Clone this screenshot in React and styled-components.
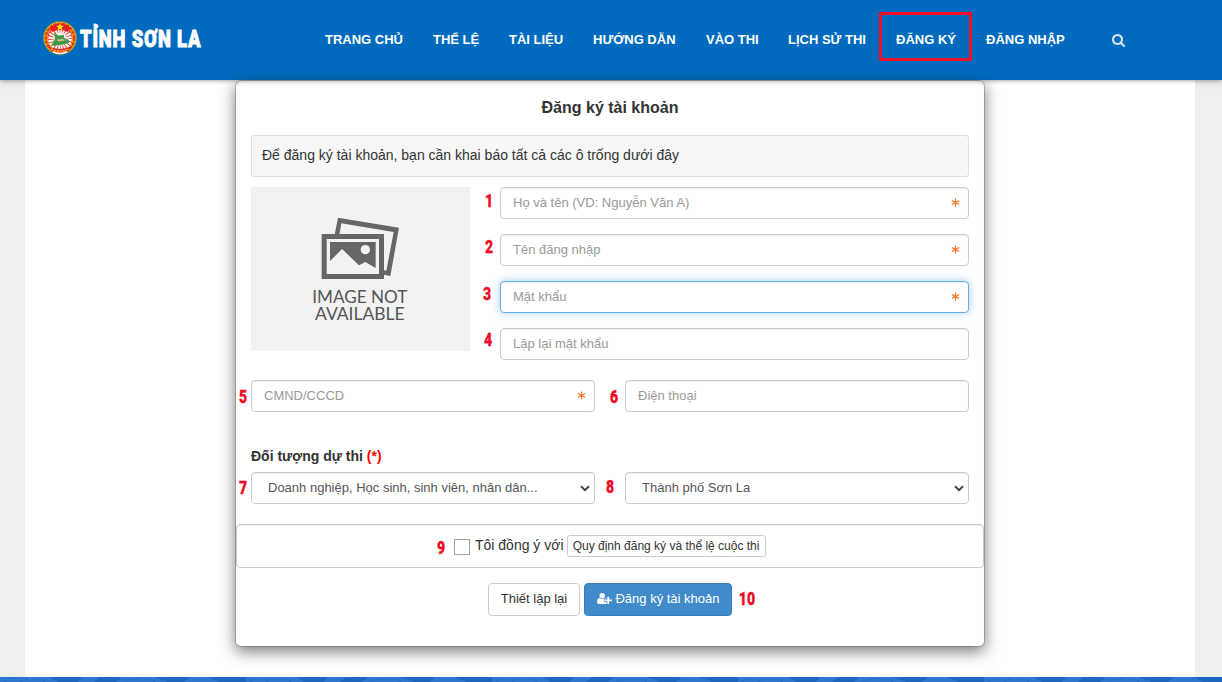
import React from "react";
import styled, { createGlobalStyle, css } from "styled-components";

const GlobalStyle = createGlobalStyle`
  *, *::before, *::after { box-sizing: border-box; }
  body {
    margin: 0;
    height: 682px;
    overflow: hidden;
    background: #efefef;
    color: #333;
    font: 14px/20px "Liberation Sans", Arial, sans-serif;
  }
`;

const Page = styled.div`
  display: flex;
  flex-direction: column;
  height: 682px;
`;

const Header = styled.header`
  display: flex;
  align-items: center;
  height: 80px;
  padding: 0 97px 0 43px;
  background: #006bbe;
  box-shadow: 0 0 6px rgba(0, 0, 0, 0.5);
`;

const Brand = styled.a`
  display: flex;
  align-items: center;
  width: 267px;
  height: 76px;
  margin-bottom: 4px;
`;

const BrandName = styled.span`
  width: 120px;
  margin: 2px 0 0 3px;
  color: #fff;
  font: 900 24px/30px Roboto, sans-serif;
  letter-spacing: 1.1px;
  white-space: nowrap;
  transform: scaleX(0.765);
  transform-origin: left;
  -webkit-text-stroke: 0.9px #fff;
`;

const Nav = styled.nav`
  display: flex;
  align-items: center;
`;

const NavLink = styled.a`
  position: relative;
  width: ${(p) => p.$w}px;
  padding-left: 15px;
  color: #fff;
  font-size: 13px;
  font-weight: bold;
  line-height: 20px;
  white-space: nowrap;
`;

const Highlight = styled.span`
  position: absolute;
  left: -2px;
  top: -18px;
  width: 93px;
  height: 49px;
  border: 3px solid #f0102a;
`;

const SearchButton = styled.a`
  display: flex;
  margin: 0 0 1px 31px;
  color: #dbe5f0;
`;

const Main = styled.main`
  display: flex;
  justify-content: center;
  flex: 1;
  width: 1170px;
  margin: 0 27px 0 25px;
  background: #fff;
  box-shadow: inset 0 5px 5px -5px rgba(0, 0, 0, 0.5);
`;

const Panel = styled.form`
  position: relative;
  width: 750px;
  height: 567px;
  border: 1px solid rgba(0, 0, 0, 0.2);
  border-radius: 6px;
  background: #fff;
  background-clip: padding-box;
  box-shadow: 0 5px 15px rgba(0, 0, 0, 0.5), inset 0 5px 5px -5px rgba(0, 0, 0, 0.4);
`;

const PanelBody = styled.div`
  padding: 16px 15px 0;
`;

const Title = styled.h2`
  margin: 0 0 16px;
  font-size: 16px;
  line-height: 22px;
  text-align: center;
`;

const Notice = styled.p`
  height: 42px;
  margin: 0 0 10px;
  padding: 9px 10px;
  border: 1px solid #ddd;
  border-radius: 3px;
  background: #f7f7f7;
`;

const TopSection = styled.div`
  display: flex;
  gap: 30px;
`;

const Picture = styled.div`
  width: 219px;
  height: 164px;
  padding: 13px 0 0 39px;
  background: #f2f2f2;
`;

const FieldStack = styled.div`
  display: grid;
  flex: 1;
  gap: 15px;
`;

const FieldRow = styled.div`
  display: grid;
  grid-template-columns: 1fr 1fr;
  gap: 30px;
  margin-top: ${(p) => p.$top}px;
`;

const Field = styled.div`
  position: relative;
  display: flex;
  height: 32px;
`;

const control = css`
  width: 100%;
  height: 32px;
  margin: 0;
  padding: 5px 12px 7px;
  border: 1px solid #ccc;
  border-radius: 4px;
  background-color: #fff;
  box-shadow: inset 0 1px 1px rgba(0, 0, 0, 0.075);
  color: #555;
  font: 13px/18px "Liberation Sans", Arial, sans-serif;
  outline: 0;
`;

const Input = styled.input`
  ${control}
  &::placeholder { color: #999; opacity: 1; }
  ${(p) => p.$active && css`
    border-color: #66afe9;
    box-shadow: inset 0 1px 1px rgba(0, 0, 0, 0.075), 0 0 8px rgba(102, 175, 233, 0.6);
  `}
`;

const Select = styled.select`
  ${control}
  appearance: none;
  padding: 6px 16px;
`;

const Chevron = styled.svg`
  position: absolute;
  right: 5px;
  top: 13px;
  fill: none;
  stroke: #444;
  stroke-width: 2;
  pointer-events: none;
`;

const RequiredMark = styled.svg`
  position: absolute;
  right: 9px;
  top: 11px;
  stroke: #f6711a;
`;

const Step = styled.b`
  position: absolute;
  left: ${(p) => p.$x}px;
  top: ${(p) => p.$y}px;
  width: 30px;
  color: #f00a24;
  font: 900 18px/20px Roboto, sans-serif;
  text-align: center;
  transform: scaleX(0.78);
  -webkit-text-stroke: 0.3px #f00a24;
`;

const Label = styled.div`
  height: 20px;
  margin: 34px 0 6px;
  font-weight: bold;
  em { color: #f00; font-style: normal; }
`;

const Agreement = styled.div`
  position: relative;
  display: flex;
  align-items: flex-start;
  height: 44px;
  margin-top: 20px;
  padding: 10px 0 0 217px;
  border: 1px solid #ccc;
  border-radius: 4px;
  box-shadow: inset 0 1px 1px rgba(0, 0, 0, 0.075);
`;

const Checkbox = styled.input`
  appearance: none;
  width: 16px;
  height: 16px;
  margin: 4px 5px 0 0;
  border: 1px solid #a2a2a2;
  background: #fff;
`;

const Button = styled.button`
  display: flex;
  align-items: center;
  justify-content: center;
  width: ${(p) => p.$w}px;
  height: 33px;
  padding: 0 0 2px;
  border: 1px solid #ccc;
  border-radius: 4px;
  background: #fff;
  color: #333;
  font: 13px/18px "Liberation Sans", Arial, sans-serif;
  white-space: nowrap;
  ${(p) => p.$primary && css`
    border-color: #357ebd;
    background: #428bca;
    color: #fff;
  `}
  ${(p) => p.$small && css`
    height: 22px;
    margin-left: 3px;
    padding: 0;
    border-radius: 3px;
    font-size: 12px;
  `}
  svg { margin: 0 3px 0 1px; }
`;

const Actions = styled.div`
  position: relative;
  display: flex;
  gap: 4px;
  padding: 15px 0 0 252px;
`;

const FooterStrip = styled.footer`
  height: 5px;
  background: #1d65c0;
  overflow: hidden;
  svg { display: block; }
`;

const Emblem = () => (
  <svg width="34" height="34" viewBox="-17 -17 34 34">
    <circle r="16.8" fill="#8aa632" />
    <circle r="16" fill="#f2bd19" />
    <circle r="14.3" fill="none" stroke="#e8351d" strokeWidth="2.4" strokeDasharray="3.4 .9" />
    <circle r="12.4" fill="#ea3a30" />
    <circle r="7" cy="1" fill="none" stroke="#fff" strokeWidth="9.6" strokeDasharray="1.5 .7" />
    <circle r="6.4" cy="1" fill="#fbeee2" />
    <path d="M-10.5-10Q0-19 10.5-10L8-6Q0-10-8-6Z" fill="#e3211c" />
    <path d="M0-15l1.1 2.7 2.8.1-2.2 1.8.8 2.8L0-9.2l-2.5 1.6.8-2.8-2.2-1.8 2.8-.1Z" fill="#ffe51f" />
    <path d="M-6-6l4 3.5 6-.5v3l5 2v3l-4 1-5 1-7 1-1-3 3-4Z" fill="#3f9a4a" />
    <path d="M-3 1.5l6-.5 2 1.5-7 1Z" fill="#e7b986" />
    <path d="M-12 8Q0 14 12 8L9 13Q0 18-9 13Z" fill="#e12b1d" />
    <path d="M-9 11Q0 15 9 11" fill="none" stroke="#f5c52b" strokeWidth="1.4" strokeDasharray="2 1" />
    <path d="M-7 13.8Q0 17 7 13.8" fill="none" stroke="#fff" strokeWidth="1.5" />
  </svg>
);

const SearchIcon = () => (
  <svg width="13" height="14" viewBox="0 0 1664 1792" fill="currentColor">
    <path d="M1152 832q0-185-131.5-316.5T704 384 387.5 515.5 256 832t131.5 316.5T704 1280t316.5-131.5T1152 832zm512 832q0 52-38 90t-90 38q-54 0-90-38l-343-342q-179 124-399 124-143 0-273.5-55.5t-225-150-150-225T0 832t55.5-273.5 150-225 225-150T704 128t273.5 55.5 225 150 150 225T1408 832q0 220-124 399l343 343q37 37 37 90z" />
  </svg>
);

const UserPlusIcon = () => (
  <svg width="15" height="13" viewBox="0 0 2048 1792" fill="currentColor">
    <path d="M704 896q-159 0-271.5-112.5T320 512t112.5-271.5T704 128t271.5 112.5T1088 512 975.5 783.5 704 896zm960 128h352q13 0 22.5 9.5t9.5 22.5v192q0 13-9.5 22.5t-22.5 9.5h-352v352q0 13-9.5 22.5t-22.5 9.5h-192q-13 0-22.5-9.5t-9.5-22.5v-352h-352q-13 0-22.5-9.5t-9.5-22.5v-192q0-13 9.5-22.5t22.5-9.5h352V672q0-13 9.5-22.5t22.5-9.5h192q13 0 22.5 9.5t9.5 22.5v352zm-736 224q0 52 38 90t90 38h256v238q-68 50-171 50H267q-121 0-194-69T0 1405q0-53 3.5-103.5t14-109T44 1084t43-97.5 62-81 85.5-53.5T346 832q19 0 39 17 79 61 154.5 91.5T704 971t164.5-30.5T1023 849q20-17 39-17 132 0 217 96h-223q-52 0-90 38t-38 90v192z" />
  </svg>
);

const MissingPicture = () => (
  <svg width="140" height="140" viewBox="0 0 420 420" fill="#666">
    <path fillRule="evenodd" d="M144 53L327 83 301 228 268 222V208L289 212 311 96 154 70 148 104H134Z" />
    <path fillRule="evenodd" d="M95 102H282V237H95ZM110 117V222H267V117Z" />
    <path d="M120 126H257V204L226 186 207 196 156 147 120 183Z" />
    <circle cx="226" cy="149" r="14" fill="#f2f2f2" />
    <g fontFamily="Lato, sans-serif" fontSize="49" fill="#555">
      <text x="67" y="309" textLength="285" lengthAdjust="spacingAndGlyphs">IMAGE NOT</text>
      <text x="75" y="361" textLength="269" lengthAdjust="spacingAndGlyphs">AVAILABLE</text>
    </g>
  </svg>
);

const Asterisk = () => (
  <RequiredMark width="9" height="9" viewBox="0 0 9 9" strokeWidth="1.2">
    <path d="M4.5.5v8M.8 2.5l7.4 4M8.2 2.5l-7.4 4" />
  </RequiredMark>
);

const TextField = ({ label, step, required, active }) => (
  <Field>
    <Step $x={step.x} $y={step.y}>{step.n}</Step>
    <Input placeholder={label} $active={active} />
    {required && <Asterisk />}
  </Field>
);

const ChoiceField = ({ value, step }) => (
  <Field>
    <Step $x={step.x} $y={step.y}>{step.n}</Step>
    <Select defaultValue={value}><option>{value}</option></Select>
    <Chevron width="10" height="7" viewBox="0 0 10 7"><path d="M1 1.2l4 4 4-4" /></Chevron>
  </Field>
);

const links = [
  ["TRANG CHỦ", 108], ["THỂ LỆ", 76], ["TÀI LIỆU", 84], ["HƯỚNG DẪN", 113],
  ["VÀO THI", 82], ["LỊCH SỬ THI", 108], ["ĐĂNG KÝ", 90, true], ["ĐĂNG NHẬP", 110],
];

export default function App() {
  return (
    <>
      <GlobalStyle />
      <Page>
        <Header>
          <Brand><Emblem /><BrandName>TỈNH SƠN LA</BrandName></Brand>
          <Nav>
            {links.map(([name, w, marked]) => (
              <NavLink key={name} $w={w}>{name}{marked && <Highlight />}</NavLink>
            ))}
            <SearchButton><SearchIcon /></SearchButton>
          </Nav>
        </Header>
        <Main>
          <Panel>
            <PanelBody>
              <Title>Đăng ký tài khoản</Title>
              <Notice>Để đăng ký tài khoản, bạn cần khai báo tất cả các ô trống dưới đây</Notice>
              <TopSection>
                <Picture><MissingPicture /></Picture>
                <FieldStack>
                  <TextField label="Họ và tên (VD: Nguyễn Văn A)" required step={{ n: 1, x: -26, y: 4 }} />
                  <TextField label="Tên đăng nhập" required step={{ n: 2, x: -26, y: 3 }} />
                  <TextField label="Mật khẩu" required active step={{ n: 3, x: -28, y: 3 }} />
                  <TextField label="Lặp lại mật khẩu" step={{ n: 4, x: -27, y: 2 }} />
                </FieldStack>
              </TopSection>
              <FieldRow $top={20}>
                <TextField label="CMND/CCCD" required step={{ n: 5, x: -23, y: 7 }} />
                <TextField label="Điện thoại" step={{ n: 6, x: -26, y: 7 }} />
              </FieldRow>
              <Label>Đối tượng dự thi <em>(*)</em></Label>
              <FieldRow $top={0}>
                <ChoiceField value="Doanh nghiệp, Học sinh, sinh viên, nhân dân..." step={{ n: 7, x: -23, y: 6 }} />
                <ChoiceField value="Thành phố Sơn La" step={{ n: 8, x: -30, y: 5 }} />
              </FieldRow>
            </PanelBody>
            <Agreement>
              <Step $x={189} $y={13}>9</Step>
              <Checkbox type="checkbox" />
              <span>Tôi đồng ý với</span>
              <Button type="button" $small $w={199}>Quy định đăng ký và thể lệ cuộc thi</Button>
            </Agreement>
            <Actions>
              <Button type="reset" $w={92}>Thiết lập lại</Button>
              <Button type="button" $primary $w={148}><UserPlusIcon />Đăng ký tài khoản</Button>
              <Step $x={496} $y={21}>10</Step>
            </Actions>
          </Panel>
        </Main>
        <FooterStrip>
          <svg width="1222" height="5">
            <defs>
              <pattern id="waves" width="246" height="5" patternUnits="userSpaceOnUse">
                <path d="M0 0H50L58 5H0ZM82 0H100L94 5H78ZM122 0H154L168 5H116ZM190 0H208L220 5H184Z" fill="#2f76d3" />
                <path d="M4 5L12 0M20 5L28 1M35 0L45 5M125 4L140 1M145 0L155 5" stroke="#2469c4" fill="none" />
              </pattern>
            </defs>
            <rect width="1222" height="5" fill="url(#waves)" />
          </svg>
        </FooterStrip>
      </Page>
    </>
  );
}
